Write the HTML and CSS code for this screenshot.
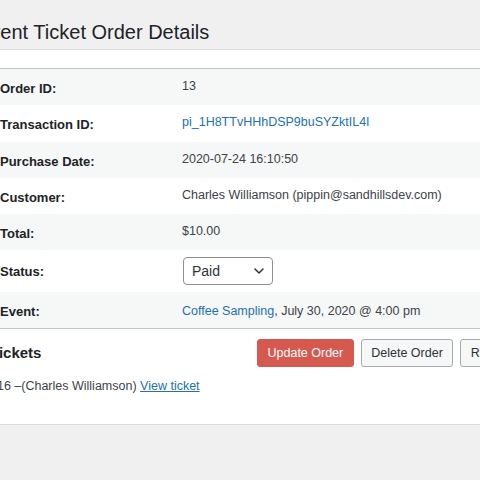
FILE: index.html
```html
<!DOCTYPE html>
<html lang="en">
<head>
<meta charset="utf-8">
<title>Event Ticket Order Details</title>
<link rel="stylesheet" href="styles.css">
</head>
<body>
<div class="wrap">
  <h1 class="page-title">Event Ticket Order Details</h1>
  <div class="panel">
    <table class="details">
      <tbody>
        <tr><th>Order ID:</th><td>13</td></tr>
        <tr class="tall-row"><th>Transaction ID:</th><td><a class="link" href="#">pi_1H8TTvHHhDSP9buSYZktIL4I</a></td></tr>
        <tr><th>Purchase Date:</th><td>2020-07-24 16:10:50</td></tr>
        <tr><th>Customer:</th><td>Charles Williamson (pippin@sandhillsdev.com)</td></tr>
        <tr><th>Total:</th><td>$10.00</td></tr>
        <tr class="status-row"><th>Status:</th><td>
          <div class="select"><span>Paid</span>
            <svg width="10" height="6" viewBox="0 0 10 6"><path d="M1 1l4 4 4-4" fill="none" stroke="#2c3338" stroke-width="1.5" stroke-linecap="round" stroke-linejoin="round"/></svg>
          </div>
        </td></tr>
        <tr class="event-row"><th>Event:</th><td><a class="link" href="#">Coffee Sampling</a>, July 30, 2020 @ 4:00 pm</td></tr>
      </tbody>
    </table>
    <div class="tickets">
      <div class="tickets-head">
        <h2>Tickets</h2>
        <div class="actions">
          <button class="btn btn-danger">Update Order</button>
          <button class="btn">Delete Order</button>
          <button class="btn">Resend Tickets</button>
        </div>
      </div>
      <p class="ticket-line">#16 –(Charles Williamson) <a class="link underline" href="#">View ticket</a></p>
    </div>
  </div>
</div>
</body>
</html>
```
FILE: styles.css
```css
html, body {
  margin: 0;
  padding: 0;
  overflow: hidden;
  background: #f0f0f1;
  font-family: "Liberation Sans", Arial, Helvetica, sans-serif;
  color: #3c434a;
}
.wrap {
  margin-left: -10px;
  width: 620px;
}
.page-title {
  margin: 0 0 5px -13px;
  padding-top: 20px;
  font-size: 20px;
  line-height: 24px;
  font-weight: 400;
  color: #1d2327;
}
.panel {
  background: #fff;
  border-top: 1px solid #dcdcde;
  border-bottom: 1px solid #dcdcde;
  padding-top: 18px;
}
.details {
  width: 100%;
  border-collapse: collapse;
  border-top: 1px solid #c3c4c7;
  border-bottom: 1px solid #c3c4c7;
}
.details tr:nth-child(odd) {
  background: #f6f7f7;
}
.details th {
  width: 182px;
  padding: 11px 0 7px 10px;
  text-align: left;
  vertical-align: top;
  font-size: 13px;
  line-height: 18px;
  font-weight: 700;
  color: #1d2327;
}
.details td {
  padding: 8px 10px 10px 0;
  vertical-align: top;
  font-size: 12.5px;
  line-height: 18px;
  color: #3c434a;
}
.details .tall-row th {
  padding-bottom: 8px;
}
.details .status-row th {
  padding: 13px 0 11px 10px;
}
.details .status-row td {
  padding: 7px 0;
}
.details .event-row td {
  padding: 10px 10px 8px 0;
}
.link {
  color: #2271b1;
  text-decoration: none;
}
.link.underline {
  text-decoration: underline;
}
.select {
  display: flex;
  align-items: center;
  justify-content: space-between;
  box-sizing: border-box;
  width: 90px;
  height: 28px;
  margin-left: 1px;
  padding: 0 8px;
  border: 1px solid #8c8f94;
  border-radius: 4px;
  background: #fff;
  font-size: 14px;
  color: #2c3338;
}
.tickets {
  padding: 10px 0 29px;
}
.tickets-head {
  display: flex;
  align-items: center;
}
.tickets-head h2 {
  flex: 0 0 267px;
  margin: 0;
  font-size: 15px;
  line-height: 20px;
  font-weight: 700;
  color: #1d2327;
}
.actions {
  display: flex;
  gap: 7px;
}
.btn {
  box-sizing: border-box;
  height: 28px;
  padding: 0 9.5px;
  border: 1px solid #a7aaad;
  border-radius: 3px;
  background: #f6f7f7;
  color: #2c3338;
  font-family: inherit;
  font-size: 12.5px;
  white-space: nowrap;
}
.btn-danger {
  background: #d6594f;
  border-color: #d6594f;
  color: #fff;
}
.ticket-line {
  margin: 10px 0 0;
  font-size: 12.5px;
  line-height: 18px;
  color: #3c434a;
}
```
